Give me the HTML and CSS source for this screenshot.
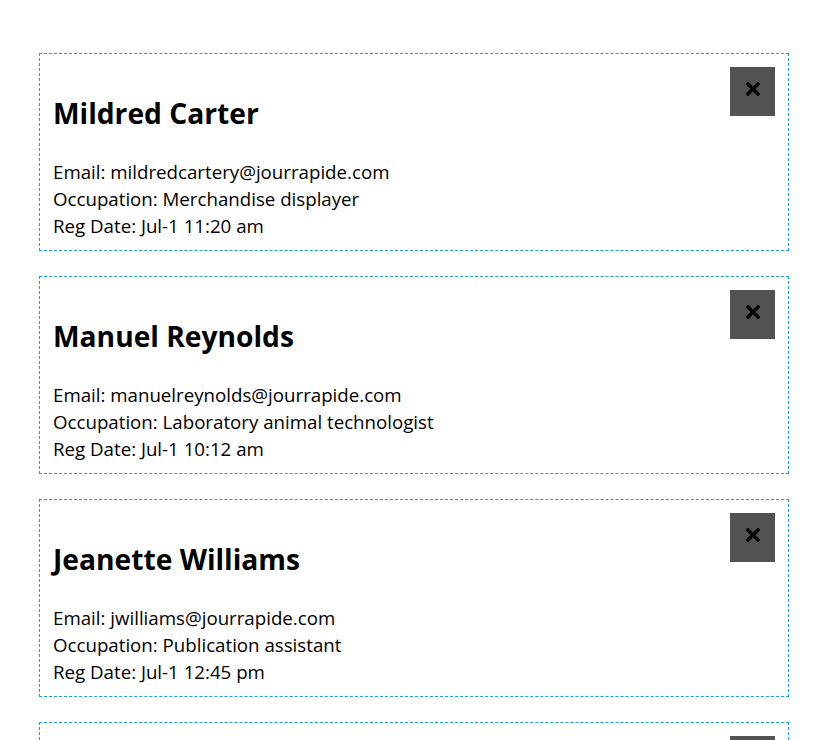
FILE: index.html
```html
<!DOCTYPE html>
<html>
<head>
<meta charset="utf-8">
<link rel="stylesheet" href="styles.css">
</head>
<body>
<div class="list">
  <div class="card">
    <button class="close" aria-label="Remove"><svg width="14" height="14" viewBox="0 0 14 14"><path d="M2 2L12 12M12 2L2 12" stroke="#000" stroke-width="3.4" stroke-linecap="square"/></svg></button>
    <h2 class="name">Mildred Carter</h2>
    <p class="info">Email: mildredcartery@jourrapide.com<br>Occupation: Merchandise displayer<br>Reg Date: Jul-1 11:20 am</p>
  </div>
  <div class="card">
    <button class="close" aria-label="Remove"><svg width="14" height="14" viewBox="0 0 14 14"><path d="M2 2L12 12M12 2L2 12" stroke="#000" stroke-width="3.4" stroke-linecap="square"/></svg></button>
    <h2 class="name">Manuel Reynolds</h2>
    <p class="info">Email: manuelreynolds@jourrapide.com<br>Occupation: Laboratory animal technologist<br>Reg Date: Jul-1 10:12 am</p>
  </div>
  <div class="card">
    <button class="close" aria-label="Remove"><svg width="14" height="14" viewBox="0 0 14 14"><path d="M2 2L12 12M12 2L2 12" stroke="#000" stroke-width="3.4" stroke-linecap="square"/></svg></button>
    <h2 class="name">Jeanette Williams</h2>
    <p class="info">Email: jwilliams@jourrapide.com<br>Occupation: Publication assistant<br>Reg Date: Jul-1 12:45 pm</p>
  </div>
  <div class="card card-last">
    <button class="close" aria-label="Remove"><svg width="14" height="14" viewBox="0 0 14 14"><path d="M2 2L12 12M12 2L2 12" stroke="#000" stroke-width="3.4" stroke-linecap="square"/></svg></button>
  </div>
</div>
</body>
</html>
```
FILE: styles.css
```css
html, body {
  margin: 0;
  padding: 0;
  background: #fff;
  overflow: hidden;
}
body {
  font-family: "Open Sans", "Noto Sans", sans-serif;
  color: #000;
}
.list {
  padding: 53px 0 0 39px;
  width: 750px;
  display: flex;
  flex-direction: column;
  gap: 25px;
}
.card {
  border: 1px dashed #1ba0e2;
  padding: 13px 13px 9px 13px;
  height: 174px;
}
.close {
  float: right;
  width: 45px;
  height: 49px;
  margin: 0;
  padding: 0 0 5px 0;
  border: none;
  background: #525252;
  display: flex;
  align-items: center;
  justify-content: center;
}
.name {
  margin: 26px 0 0 0;
  font-size: 28.2px;
  line-height: 40px;
  font-weight: 700;
}
.info {
  margin: 25px 0 0 0;
  font-size: 18.7px;
  line-height: 27px;
}
```
